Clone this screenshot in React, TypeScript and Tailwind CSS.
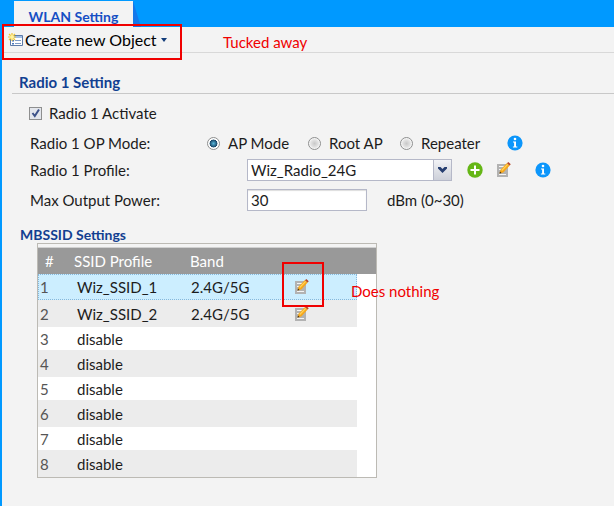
import { useState } from "react";

function InfoIcon() {
  return (
    <svg viewBox="0 0 16 16" className="block size-4" aria-hidden="true">
      <circle cx="8" cy="8" r="7.6" fill="#0c96fb" />
      <circle cx="8" cy="4" r="1.3" fill="#fff" />
      <path d="M6 6.400h3v5h1.300v1.200H5.900v-1.200h1.200V7.500H6z" fill="#fff" />
    </svg>
  );
}

function AddIcon() {
  return (
    <svg viewBox="0 0 16 16" className="block size-4" aria-hidden="true">
      <circle cx="8" cy="8" r="7.7" fill="#65b616" />
      <path d="M7 3.500h2V7h3.500v2H9v3.500H7V9H3.500V7H7z" fill="#fff" />
    </svg>
  );
}

function EditIcon() {
  return (
    <svg viewBox="0 0 14 16" className="block h-4 w-[14px]" aria-hidden="true">
      <path d="M0 2h11v13H0z" fill="#b2b2b2" />
      <path d="M2 4h6v1H2zM2 7h3v1H2zM2 12h7v1H2z" fill="#f4f4f4" />
      <path d="M2.500 11.500l1-3.800L10 1l2.700 2.400-6.400 7z" fill="#f7a81b" />
      <path d="M4.300 8L10.300 2l.8.700-6 6.200z" fill="#ffd45c" />
      <path d="M10 1.300L11.300 0l2.500 2.200-1.300 1.300z" fill="#b5482b" />
      <path d="M2.500 11.500l.5-2 1.500 1.400z" fill="#3b2a1a" />
    </svg>
  );
}

function NewObjectIcon() {
  return (
    <svg viewBox="0 0 16 14" className="block h-[14px] w-4" aria-hidden="true">
      <path d="M2.500 2.500h12v10h-12z" fill="#fff" stroke="#5c7ba8" />
      <path d="M3 3h11v2H3z" fill="#a3bfe6" />
      <path d="M4 7h2v1.500H4zM4 10h2v1.500H4z" fill="#4877bb" />
      <path d="M7 7h6v1H7zM7 10h6v1H7z" fill="#7e9cc6" />
      <path
        d="M4 0v8M0 4h8M1 1l6 6M7 1L1 7"
        stroke="#f0c52e"
        strokeWidth="1.2"
      />
      <circle cx="4" cy="4" r="2" fill="#fff3a0" />
    </svg>
  );
}

const modes = [
  { name: "AP Mode", width: "w-[101px]" },
  { name: "Root AP", width: "w-[92px]" },
  { name: "Repeater", width: "w-[100px]" },
];

const profiles = [
  { name: "Wiz_SSID_1", band: "2.4G/5G" },
  { name: "Wiz_SSID_2", band: "2.4G/5G" },
  { name: "disable", band: "" },
  { name: "disable", band: "" },
  { name: "disable", band: "" },
  { name: "disable", band: "" },
  { name: "disable", band: "" },
  { name: "disable", band: "" },
];

function rowStyle(index: number) {
  if (index === 0)
    return "h-[26px] bg-[#cceeff] outline-1 -outline-offset-1 outline-dotted outline-[#86b8dc]";
  return index % 2 ? "h-[27px] bg-[#ececec]" : "h-[23px] bg-white";
}

export default function App() {
  const [active, setActive] = useState(true);
  const [mode, setMode] = useState("AP Mode");
  const [power, setPower] = useState("30");

  return (
    <div className="relative flex min-h-screen flex-col border-l-2 border-[#0099ff] bg-[#f3f3f3] font-['Century_Gothic',Lato,sans-serif] text-[15px] leading-5 text-[#1c1c1c]">
      <header className="flex h-[27px] items-end bg-[#0099ff] pl-3">
        <button
          type="button"
          className="h-[26px] w-[119px] bg-[#f3f3f3] pt-[6px] text-[14px] font-bold text-[#164fc4]"
        >
          WLAN Setting
        </button>
        <svg viewBox="0 0 8 26" className="h-[26px] w-2" aria-hidden="true">
          <path d="M0 0l8 26H0z" fill="#1578ea" />
        </svg>
      </header>

      <div className="flex h-[26px] items-center border-b border-[#d8d8d8] pl-[6px]">
        <button type="button" className="flex items-center text-[16px] text-black">
          <NewObjectIcon />
          <span className="pl-px">Create new Object</span>
          <svg viewBox="0 0 6 4" className="ml-1 h-1 w-[6px]" aria-hidden="true">
            <path d="M0 0h6L3 4z" fill="#123c7a" />
          </svg>
        </button>
      </div>

      <main>
        <h2 className="ml-[10px] mt-[19px] h-[22px] border-b border-[#c8c8c8] pl-[7px] font-bold text-[#123f91]">
          Radio 1 Setting
        </h2>

        <form className="pl-[27px] pt-[5px]" onSubmit={(e) => e.preventDefault()}>
          <label className="flex h-7 w-fit items-center gap-[7px]">
            <input
              type="checkbox"
              checked={active}
              onChange={(e) => setActive(e.target.checked)}
              className="peer sr-only"
            />
            <span className="flex size-[13px] items-center justify-center border border-[#8e8f8f] bg-[#e3e6ec] peer-focus-visible:outline-2">
              {active && (
                <svg viewBox="0 0 10 10" className="size-[10px]" aria-hidden="true">
                  <path d="M1.500 5l2.300 3L8 1.500" fill="none" stroke="#3d5289" strokeWidth="2" />
                </svg>
              )}
            </span>
            Radio 1 Activate
          </label>

          <fieldset className="mt-[2px] flex h-7 items-center">
            <legend className="float-left w-[178px] pl-px">Radio 1 OP Mode:</legend>
            {modes.map((item) => (
              <label key={item.name} className={`flex items-center gap-2 ${item.width}`}>
                <input
                  type="radio"
                  name="mode"
                  checked={mode === item.name}
                  onChange={() => setMode(item.name)}
                  className="size-[13px] appearance-none rounded-full border border-[#8e8f8f] bg-[radial-gradient(circle,#c8c8c8_0,#e4e4e4_50%,#ffffff_75%)] checked:bg-[radial-gradient(circle,#58b8dc_0,#174466_48%,#ffffff_54%)]"
                />
                {item.name}
              </label>
            ))}
            <button type="button" aria-label="Operating mode help" className="ml-[7px]">
              <InfoIcon />
            </button>
          </fieldset>

          <div className="flex h-[26px] items-center">
            <label htmlFor="profile" className="w-[218px] pl-px">
              Radio 1 Profile:
            </label>
            <div className="grid h-[22px] w-[205px] grid-cols-[1fr_18px] border border-[#b5b8c8] bg-white">
              <select
                id="profile"
                className="col-span-2 col-start-1 row-start-1 h-5 appearance-none bg-transparent pl-[3px] leading-5"
              >
                <option>Wiz_Radio_24G</option>
              </select>
              <span className="pointer-events-none col-start-2 row-start-1 flex items-center justify-center border-l border-[#b5b8c8] bg-linear-to-b from-[#f2f3f6] to-[#cdd0d9]">
                <svg viewBox="0 0 9 6" className="h-[6px] w-[9px]" aria-hidden="true">
                  <path d="M0 0h2.500l2 2 2-2H9v1.500L4.500 6 0 1.500z" fill="#263e70" />
                </svg>
              </span>
            </div>
            <button type="button" aria-label="Add profile" className="ml-[15px]">
              <AddIcon />
            </button>
            <button type="button" aria-label="Edit profile" className="ml-[14px]">
              <EditIcon />
            </button>
            <button type="button" aria-label="Profile help" className="ml-6">
              <InfoIcon />
            </button>
          </div>

          <div className="mt-[2px] flex h-[30px] items-center">
            <label htmlFor="power" className="w-[218px] pl-px">
              Max Output Power:
            </label>
            <input
              id="power"
              value={power}
              onChange={(e) => setPower(e.target.value)}
              className="h-[22px] w-[120px] border border-[#b5b8c8] bg-white px-[3px] shadow-[inset_0_1px_1px_#dddddd]"
            />
            <span className="pl-5">dBm (0~30)</span>
          </div>
        </form>

        <h2 className="mt-[10px] h-[18px] pl-[18px] text-[14px] font-bold text-[#123f91]">
          MBSSID Settings
        </h2>

        <section className="ml-[35px] w-[340px] border border-[#bcbab4] bg-white">
          <div className="h-1 border-b border-[#d0d0d0] bg-[#f3f3f3]" />
          <div className="bg-linear-to-b from-[#999999] from-[26px] to-white to-[26px]">
            <table className="w-[319px] table-fixed border-collapse text-left">
              <colgroup>
                <col className="w-9" />
                <col className="w-[116px]" />
                <col className="w-[105px]" />
                <col />
              </colgroup>
              <thead>
                <tr className="h-[26px] text-white">
                  <th scope="col" className="p-0 pl-[7px] font-normal">#</th>
                  <th scope="col" className="p-0 font-normal">SSID Profile</th>
                  <th scope="col" className="p-0 font-normal">Band</th>
                  <td className="p-0" />
                </tr>
              </thead>
              <tbody>
                {profiles.map((profile, index) => (
                  <tr key={index} className={rowStyle(index)}>
                    <td className="p-0 pl-[2px] text-[#555555]">{index + 1}</td>
                    <td className="p-0 pl-[3px]">{profile.name}</td>
                    <td className="p-0 pl-px">{profile.band}</td>
                    <td className="p-0">
                      {profile.band && (
                        <button
                          type="button"
                          aria-label={`Edit ${profile.name}`}
                          className="block"
                        >
                          <EditIcon />
                        </button>
                      )}
                    </td>
                  </tr>
                ))}
              </tbody>
            </table>
          </div>
        </section>
      </main>

      <div className="pointer-events-none absolute left-0 top-6 h-9 w-[180px] border-2 border-[#f00000]" />
      <p className="absolute left-[221px] top-8 text-[#f00000]">Tucked away</p>
      <div className="pointer-events-none absolute left-[280px] top-[262px] h-[45px] w-[42px] border-2 border-[#f00000]" />
      <p className="absolute left-[349px] top-[281px] text-[#f00000]">Does nothing</p>
    </div>
  );
}
